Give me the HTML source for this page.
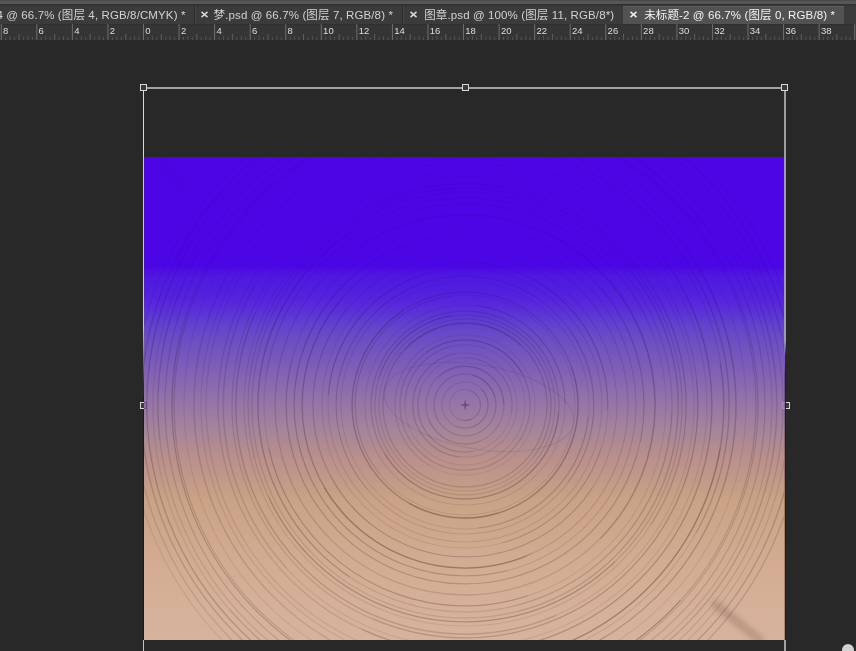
<!DOCTYPE html>
<html lang="zh"><head><meta charset="utf-8"><title>Photoshop</title>
<style>
html,body{margin:0;padding:0;}
body{width:856px;height:651px;overflow:hidden;background:#282828;position:relative;font-family:"Liberation Sans","Noto Sans CJK SC",sans-serif;}
#top{position:absolute;left:0;top:0;width:856px;height:4px;background:linear-gradient(to bottom,#4a4a4a 0,#4a4a4a 1.4px,#565656 1.4px,#565656 4px);}
#topline{position:absolute;left:0;top:4px;width:856px;height:2px;background:linear-gradient(to bottom,#2f2f2f,#363636);}
#tabs{position:absolute;left:0;top:6px;width:856px;height:18px;background:#3b3b3b;}
.tab{opacity:0.995;position:absolute;top:0;height:18px;line-height:19px;font-size:11.5px;letter-spacing:0.12px;color:#d2d2d2;white-space:nowrap;}
.xi{position:absolute;width:9px;height:9px;overflow:visible;}
.tab .x{position:absolute;top:0;font-size:11px;}
.sep{position:absolute;top:0;width:1px;height:18px;background:#2a2a2a;}
.sep2{position:absolute;top:0;width:1px;height:18px;background:#474747;}
#active{position:absolute;left:623px;top:6px;width:221px;height:18px;background:#525252;border-top:1px solid #5e5e5e;box-sizing:border-box;}
#ruler{position:absolute;left:0;top:24px;width:856px;height:16px;background:#353535;box-shadow:inset 0 1px 0 #303030;}
.rl{opacity:0.995;position:absolute;top:1.8px;font-size:9.5px;line-height:10px;color:#dedede;}
#img{position:absolute;left:144px;top:157px;width:641px;height:483px;overflow:hidden;
background:linear-gradient(to bottom,rgb(76,5,228) 0.00%,rgb(76,5,228) 22.77%,rgb(78,18,227) 23.40%,rgb(81,28,225) 24.84%,rgb(88,42,220) 29.61%,rgb(97,62,209) 33.75%,rgb(108,78,196) 37.89%,rgb(128,96,182) 44.10%,rgb(148,115,169) 50.31%,rgb(166,132,154) 56.52%,rgb(186,145,140) 62.73%,rgb(202,162,133) 71.01%,rgb(211,171,146) 83.44%,rgb(215,178,155) 97.93%,rgb(215,179,156) 100.00%);}
.ln{position:absolute;background:#a2a2a2;}
.hd{position:absolute;width:5px;height:5px;border:1px solid #d6d6d6;background:#3a3a3a;}
</style></head><body>
<div id="top"></div><div id="topline"></div>
<div id="tabs">
<div class="tab" style="left:-3.6px">4 @ 66.7% (图层 4, RGB/8/CMYK) *</div>
<div class="sep" style="left:194px"></div><div class="sep2" style="left:195px"></div>
<svg class="xi" style="left:199.7px;top:4.2px" viewBox="-4.5 -4.5 9 9"><path d="M-3 -2.6L3 2.6M3 -2.6L-3 2.6" stroke="#dcdcdc" stroke-width="1.4" fill="none"/></svg><div class="tab" style="left:213.6px">梦.psd @ 66.7% (图层 7, RGB/8) *</div>
<div class="sep" style="left:402px"></div><div class="sep2" style="left:403px"></div>
<svg class="xi" style="left:408.5px;top:4.2px" viewBox="-4.5 -4.5 9 9"><path d="M-3 -2.6L3 2.6M3 -2.6L-3 2.6" stroke="#dcdcdc" stroke-width="1.4" fill="none"/></svg><div class="tab" style="left:424.2px">图章.psd @ 100% (图层 11, RGB/8*)</div>
</div>
<div id="active"></div>
<svg class="xi" style="left:629.1px;top:10.2px" viewBox="-4.5 -4.5 9 9"><path d="M-3 -2.6L3 2.6M3 -2.6L-3 2.6" stroke="#f4f4f4" stroke-width="1.4" fill="none"/></svg><div class="tab" style="left:644.2px;top:6px;color:#f4f4f4">未标题-2 @ 66.7% (图层 0, RGB/8) *</div>
<div id="ruler">
<svg width="856" height="16" style="position:absolute;left:0;top:0"><rect x="0.76" y="0" width="1" height="16" fill="#bdbdbd" opacity="0.42"/><rect x="5.20" y="13" width="1" height="3" fill="#bdbdbd" opacity="0.22"/><rect x="9.65" y="12" width="1" height="4" fill="#bdbdbd" opacity="0.22"/><rect x="14.09" y="13" width="1" height="3" fill="#bdbdbd" opacity="0.22"/><rect x="18.54" y="10" width="1" height="6" fill="#bdbdbd" opacity="0.3"/><rect x="22.98" y="13" width="1" height="3" fill="#bdbdbd" opacity="0.22"/><rect x="27.43" y="12" width="1" height="4" fill="#bdbdbd" opacity="0.22"/><rect x="31.88" y="13" width="1" height="3" fill="#bdbdbd" opacity="0.22"/><rect x="36.32" y="0" width="1" height="16" fill="#bdbdbd" opacity="0.42"/><rect x="40.76" y="13" width="1" height="3" fill="#bdbdbd" opacity="0.22"/><rect x="45.21" y="12" width="1" height="4" fill="#bdbdbd" opacity="0.22"/><rect x="49.66" y="13" width="1" height="3" fill="#bdbdbd" opacity="0.22"/><rect x="54.10" y="10" width="1" height="6" fill="#bdbdbd" opacity="0.3"/><rect x="58.54" y="13" width="1" height="3" fill="#bdbdbd" opacity="0.22"/><rect x="62.99" y="12" width="1" height="4" fill="#bdbdbd" opacity="0.22"/><rect x="67.44" y="13" width="1" height="3" fill="#bdbdbd" opacity="0.22"/><rect x="71.88" y="0" width="1" height="16" fill="#bdbdbd" opacity="0.42"/><rect x="76.32" y="13" width="1" height="3" fill="#bdbdbd" opacity="0.22"/><rect x="80.77" y="12" width="1" height="4" fill="#bdbdbd" opacity="0.22"/><rect x="85.22" y="13" width="1" height="3" fill="#bdbdbd" opacity="0.22"/><rect x="89.66" y="10" width="1" height="6" fill="#bdbdbd" opacity="0.3"/><rect x="94.10" y="13" width="1" height="3" fill="#bdbdbd" opacity="0.22"/><rect x="98.55" y="12" width="1" height="4" fill="#bdbdbd" opacity="0.22"/><rect x="103.00" y="13" width="1" height="3" fill="#bdbdbd" opacity="0.22"/><rect x="107.44" y="0" width="1" height="16" fill="#bdbdbd" opacity="0.42"/><rect x="111.88" y="13" width="1" height="3" fill="#bdbdbd" opacity="0.22"/><rect x="116.33" y="12" width="1" height="4" fill="#bdbdbd" opacity="0.22"/><rect x="120.78" y="13" width="1" height="3" fill="#bdbdbd" opacity="0.22"/><rect x="125.22" y="10" width="1" height="6" fill="#bdbdbd" opacity="0.3"/><rect x="129.66" y="13" width="1" height="3" fill="#bdbdbd" opacity="0.22"/><rect x="134.11" y="12" width="1" height="4" fill="#bdbdbd" opacity="0.22"/><rect x="138.56" y="13" width="1" height="3" fill="#bdbdbd" opacity="0.22"/><rect x="143.00" y="0" width="1" height="16" fill="#bdbdbd" opacity="0.42"/><rect x="147.44" y="13" width="1" height="3" fill="#bdbdbd" opacity="0.22"/><rect x="151.89" y="12" width="1" height="4" fill="#bdbdbd" opacity="0.22"/><rect x="156.34" y="13" width="1" height="3" fill="#bdbdbd" opacity="0.22"/><rect x="160.78" y="10" width="1" height="6" fill="#bdbdbd" opacity="0.3"/><rect x="165.22" y="13" width="1" height="3" fill="#bdbdbd" opacity="0.22"/><rect x="169.67" y="12" width="1" height="4" fill="#bdbdbd" opacity="0.22"/><rect x="174.12" y="13" width="1" height="3" fill="#bdbdbd" opacity="0.22"/><rect x="178.56" y="0" width="1" height="16" fill="#bdbdbd" opacity="0.42"/><rect x="183.00" y="13" width="1" height="3" fill="#bdbdbd" opacity="0.22"/><rect x="187.45" y="12" width="1" height="4" fill="#bdbdbd" opacity="0.22"/><rect x="191.90" y="13" width="1" height="3" fill="#bdbdbd" opacity="0.22"/><rect x="196.34" y="10" width="1" height="6" fill="#bdbdbd" opacity="0.3"/><rect x="200.78" y="13" width="1" height="3" fill="#bdbdbd" opacity="0.22"/><rect x="205.23" y="12" width="1" height="4" fill="#bdbdbd" opacity="0.22"/><rect x="209.68" y="13" width="1" height="3" fill="#bdbdbd" opacity="0.22"/><rect x="214.12" y="0" width="1" height="16" fill="#bdbdbd" opacity="0.42"/><rect x="218.56" y="13" width="1" height="3" fill="#bdbdbd" opacity="0.22"/><rect x="223.01" y="12" width="1" height="4" fill="#bdbdbd" opacity="0.22"/><rect x="227.46" y="13" width="1" height="3" fill="#bdbdbd" opacity="0.22"/><rect x="231.90" y="10" width="1" height="6" fill="#bdbdbd" opacity="0.3"/><rect x="236.34" y="13" width="1" height="3" fill="#bdbdbd" opacity="0.22"/><rect x="240.79" y="12" width="1" height="4" fill="#bdbdbd" opacity="0.22"/><rect x="245.24" y="13" width="1" height="3" fill="#bdbdbd" opacity="0.22"/><rect x="249.68" y="0" width="1" height="16" fill="#bdbdbd" opacity="0.42"/><rect x="254.12" y="13" width="1" height="3" fill="#bdbdbd" opacity="0.22"/><rect x="258.57" y="12" width="1" height="4" fill="#bdbdbd" opacity="0.22"/><rect x="263.01" y="13" width="1" height="3" fill="#bdbdbd" opacity="0.22"/><rect x="267.46" y="10" width="1" height="6" fill="#bdbdbd" opacity="0.3"/><rect x="271.90" y="13" width="1" height="3" fill="#bdbdbd" opacity="0.22"/><rect x="276.35" y="12" width="1" height="4" fill="#bdbdbd" opacity="0.22"/><rect x="280.80" y="13" width="1" height="3" fill="#bdbdbd" opacity="0.22"/><rect x="285.24" y="0" width="1" height="16" fill="#bdbdbd" opacity="0.42"/><rect x="289.69" y="13" width="1" height="3" fill="#bdbdbd" opacity="0.22"/><rect x="294.13" y="12" width="1" height="4" fill="#bdbdbd" opacity="0.22"/><rect x="298.58" y="13" width="1" height="3" fill="#bdbdbd" opacity="0.22"/><rect x="303.02" y="10" width="1" height="6" fill="#bdbdbd" opacity="0.3"/><rect x="307.47" y="13" width="1" height="3" fill="#bdbdbd" opacity="0.22"/><rect x="311.91" y="12" width="1" height="4" fill="#bdbdbd" opacity="0.22"/><rect x="316.36" y="13" width="1" height="3" fill="#bdbdbd" opacity="0.22"/><rect x="320.80" y="0" width="1" height="16" fill="#bdbdbd" opacity="0.42"/><rect x="325.25" y="13" width="1" height="3" fill="#bdbdbd" opacity="0.22"/><rect x="329.69" y="12" width="1" height="4" fill="#bdbdbd" opacity="0.22"/><rect x="334.13" y="13" width="1" height="3" fill="#bdbdbd" opacity="0.22"/><rect x="338.58" y="10" width="1" height="6" fill="#bdbdbd" opacity="0.3"/><rect x="343.02" y="13" width="1" height="3" fill="#bdbdbd" opacity="0.22"/><rect x="347.47" y="12" width="1" height="4" fill="#bdbdbd" opacity="0.22"/><rect x="351.92" y="13" width="1" height="3" fill="#bdbdbd" opacity="0.22"/><rect x="356.36" y="0" width="1" height="16" fill="#bdbdbd" opacity="0.42"/><rect x="360.81" y="13" width="1" height="3" fill="#bdbdbd" opacity="0.22"/><rect x="365.25" y="12" width="1" height="4" fill="#bdbdbd" opacity="0.22"/><rect x="369.70" y="13" width="1" height="3" fill="#bdbdbd" opacity="0.22"/><rect x="374.14" y="10" width="1" height="6" fill="#bdbdbd" opacity="0.3"/><rect x="378.59" y="13" width="1" height="3" fill="#bdbdbd" opacity="0.22"/><rect x="383.03" y="12" width="1" height="4" fill="#bdbdbd" opacity="0.22"/><rect x="387.48" y="13" width="1" height="3" fill="#bdbdbd" opacity="0.22"/><rect x="391.92" y="0" width="1" height="16" fill="#bdbdbd" opacity="0.42"/><rect x="396.37" y="13" width="1" height="3" fill="#bdbdbd" opacity="0.22"/><rect x="400.81" y="12" width="1" height="4" fill="#bdbdbd" opacity="0.22"/><rect x="405.25" y="13" width="1" height="3" fill="#bdbdbd" opacity="0.22"/><rect x="409.70" y="10" width="1" height="6" fill="#bdbdbd" opacity="0.3"/><rect x="414.15" y="13" width="1" height="3" fill="#bdbdbd" opacity="0.22"/><rect x="418.59" y="12" width="1" height="4" fill="#bdbdbd" opacity="0.22"/><rect x="423.04" y="13" width="1" height="3" fill="#bdbdbd" opacity="0.22"/><rect x="427.48" y="0" width="1" height="16" fill="#bdbdbd" opacity="0.42"/><rect x="431.93" y="13" width="1" height="3" fill="#bdbdbd" opacity="0.22"/><rect x="436.37" y="12" width="1" height="4" fill="#bdbdbd" opacity="0.22"/><rect x="440.81" y="13" width="1" height="3" fill="#bdbdbd" opacity="0.22"/><rect x="445.26" y="10" width="1" height="6" fill="#bdbdbd" opacity="0.3"/><rect x="449.71" y="13" width="1" height="3" fill="#bdbdbd" opacity="0.22"/><rect x="454.15" y="12" width="1" height="4" fill="#bdbdbd" opacity="0.22"/><rect x="458.60" y="13" width="1" height="3" fill="#bdbdbd" opacity="0.22"/><rect x="463.04" y="0" width="1" height="16" fill="#bdbdbd" opacity="0.42"/><rect x="467.49" y="13" width="1" height="3" fill="#bdbdbd" opacity="0.22"/><rect x="471.93" y="12" width="1" height="4" fill="#bdbdbd" opacity="0.22"/><rect x="476.38" y="13" width="1" height="3" fill="#bdbdbd" opacity="0.22"/><rect x="480.82" y="10" width="1" height="6" fill="#bdbdbd" opacity="0.3"/><rect x="485.27" y="13" width="1" height="3" fill="#bdbdbd" opacity="0.22"/><rect x="489.71" y="12" width="1" height="4" fill="#bdbdbd" opacity="0.22"/><rect x="494.16" y="13" width="1" height="3" fill="#bdbdbd" opacity="0.22"/><rect x="498.60" y="0" width="1" height="16" fill="#bdbdbd" opacity="0.42"/><rect x="503.05" y="13" width="1" height="3" fill="#bdbdbd" opacity="0.22"/><rect x="507.49" y="12" width="1" height="4" fill="#bdbdbd" opacity="0.22"/><rect x="511.93" y="13" width="1" height="3" fill="#bdbdbd" opacity="0.22"/><rect x="516.38" y="10" width="1" height="6" fill="#bdbdbd" opacity="0.3"/><rect x="520.83" y="13" width="1" height="3" fill="#bdbdbd" opacity="0.22"/><rect x="525.27" y="12" width="1" height="4" fill="#bdbdbd" opacity="0.22"/><rect x="529.72" y="13" width="1" height="3" fill="#bdbdbd" opacity="0.22"/><rect x="534.16" y="0" width="1" height="16" fill="#bdbdbd" opacity="0.42"/><rect x="538.61" y="13" width="1" height="3" fill="#bdbdbd" opacity="0.22"/><rect x="543.05" y="12" width="1" height="4" fill="#bdbdbd" opacity="0.22"/><rect x="547.50" y="13" width="1" height="3" fill="#bdbdbd" opacity="0.22"/><rect x="551.94" y="10" width="1" height="6" fill="#bdbdbd" opacity="0.3"/><rect x="556.38" y="13" width="1" height="3" fill="#bdbdbd" opacity="0.22"/><rect x="560.83" y="12" width="1" height="4" fill="#bdbdbd" opacity="0.22"/><rect x="565.28" y="13" width="1" height="3" fill="#bdbdbd" opacity="0.22"/><rect x="569.72" y="0" width="1" height="16" fill="#bdbdbd" opacity="0.42"/><rect x="574.16" y="13" width="1" height="3" fill="#bdbdbd" opacity="0.22"/><rect x="578.61" y="12" width="1" height="4" fill="#bdbdbd" opacity="0.22"/><rect x="583.06" y="13" width="1" height="3" fill="#bdbdbd" opacity="0.22"/><rect x="587.50" y="10" width="1" height="6" fill="#bdbdbd" opacity="0.3"/><rect x="591.95" y="13" width="1" height="3" fill="#bdbdbd" opacity="0.22"/><rect x="596.39" y="12" width="1" height="4" fill="#bdbdbd" opacity="0.22"/><rect x="600.84" y="13" width="1" height="3" fill="#bdbdbd" opacity="0.22"/><rect x="605.28" y="0" width="1" height="16" fill="#bdbdbd" opacity="0.42"/><rect x="609.73" y="13" width="1" height="3" fill="#bdbdbd" opacity="0.22"/><rect x="614.17" y="12" width="1" height="4" fill="#bdbdbd" opacity="0.22"/><rect x="618.62" y="13" width="1" height="3" fill="#bdbdbd" opacity="0.22"/><rect x="623.06" y="10" width="1" height="6" fill="#bdbdbd" opacity="0.3"/><rect x="627.51" y="13" width="1" height="3" fill="#bdbdbd" opacity="0.22"/><rect x="631.95" y="12" width="1" height="4" fill="#bdbdbd" opacity="0.22"/><rect x="636.39" y="13" width="1" height="3" fill="#bdbdbd" opacity="0.22"/><rect x="640.84" y="0" width="1" height="16" fill="#bdbdbd" opacity="0.42"/><rect x="645.29" y="13" width="1" height="3" fill="#bdbdbd" opacity="0.22"/><rect x="649.73" y="12" width="1" height="4" fill="#bdbdbd" opacity="0.22"/><rect x="654.17" y="13" width="1" height="3" fill="#bdbdbd" opacity="0.22"/><rect x="658.62" y="10" width="1" height="6" fill="#bdbdbd" opacity="0.3"/><rect x="663.07" y="13" width="1" height="3" fill="#bdbdbd" opacity="0.22"/><rect x="667.51" y="12" width="1" height="4" fill="#bdbdbd" opacity="0.22"/><rect x="671.96" y="13" width="1" height="3" fill="#bdbdbd" opacity="0.22"/><rect x="676.40" y="0" width="1" height="16" fill="#bdbdbd" opacity="0.42"/><rect x="680.85" y="13" width="1" height="3" fill="#bdbdbd" opacity="0.22"/><rect x="685.29" y="12" width="1" height="4" fill="#bdbdbd" opacity="0.22"/><rect x="689.74" y="13" width="1" height="3" fill="#bdbdbd" opacity="0.22"/><rect x="694.18" y="10" width="1" height="6" fill="#bdbdbd" opacity="0.3"/><rect x="698.62" y="13" width="1" height="3" fill="#bdbdbd" opacity="0.22"/><rect x="703.07" y="12" width="1" height="4" fill="#bdbdbd" opacity="0.22"/><rect x="707.51" y="13" width="1" height="3" fill="#bdbdbd" opacity="0.22"/><rect x="711.96" y="0" width="1" height="16" fill="#bdbdbd" opacity="0.42"/><rect x="716.41" y="13" width="1" height="3" fill="#bdbdbd" opacity="0.22"/><rect x="720.85" y="12" width="1" height="4" fill="#bdbdbd" opacity="0.22"/><rect x="725.30" y="13" width="1" height="3" fill="#bdbdbd" opacity="0.22"/><rect x="729.74" y="10" width="1" height="6" fill="#bdbdbd" opacity="0.3"/><rect x="734.19" y="13" width="1" height="3" fill="#bdbdbd" opacity="0.22"/><rect x="738.63" y="12" width="1" height="4" fill="#bdbdbd" opacity="0.22"/><rect x="743.08" y="13" width="1" height="3" fill="#bdbdbd" opacity="0.22"/><rect x="747.52" y="0" width="1" height="16" fill="#bdbdbd" opacity="0.42"/><rect x="751.97" y="13" width="1" height="3" fill="#bdbdbd" opacity="0.22"/><rect x="756.41" y="12" width="1" height="4" fill="#bdbdbd" opacity="0.22"/><rect x="760.86" y="13" width="1" height="3" fill="#bdbdbd" opacity="0.22"/><rect x="765.30" y="10" width="1" height="6" fill="#bdbdbd" opacity="0.3"/><rect x="769.75" y="13" width="1" height="3" fill="#bdbdbd" opacity="0.22"/><rect x="774.19" y="12" width="1" height="4" fill="#bdbdbd" opacity="0.22"/><rect x="778.63" y="13" width="1" height="3" fill="#bdbdbd" opacity="0.22"/><rect x="783.08" y="0" width="1" height="16" fill="#bdbdbd" opacity="0.42"/><rect x="787.53" y="13" width="1" height="3" fill="#bdbdbd" opacity="0.22"/><rect x="791.97" y="12" width="1" height="4" fill="#bdbdbd" opacity="0.22"/><rect x="796.42" y="13" width="1" height="3" fill="#bdbdbd" opacity="0.22"/><rect x="800.86" y="10" width="1" height="6" fill="#bdbdbd" opacity="0.3"/><rect x="805.31" y="13" width="1" height="3" fill="#bdbdbd" opacity="0.22"/><rect x="809.75" y="12" width="1" height="4" fill="#bdbdbd" opacity="0.22"/><rect x="814.20" y="13" width="1" height="3" fill="#bdbdbd" opacity="0.22"/><rect x="818.64" y="0" width="1" height="16" fill="#bdbdbd" opacity="0.42"/><rect x="823.09" y="13" width="1" height="3" fill="#bdbdbd" opacity="0.22"/><rect x="827.53" y="12" width="1" height="4" fill="#bdbdbd" opacity="0.22"/><rect x="831.98" y="13" width="1" height="3" fill="#bdbdbd" opacity="0.22"/><rect x="836.42" y="10" width="1" height="6" fill="#bdbdbd" opacity="0.3"/><rect x="840.87" y="13" width="1" height="3" fill="#bdbdbd" opacity="0.22"/><rect x="845.31" y="12" width="1" height="4" fill="#bdbdbd" opacity="0.22"/><rect x="849.75" y="13" width="1" height="3" fill="#bdbdbd" opacity="0.22"/><rect x="854.20" y="0" width="1" height="16" fill="#bdbdbd" opacity="0.42"/></svg>
<span class="rl" style="left:3.1px">8</span><span class="rl" style="left:38.6px">6</span><span class="rl" style="left:74.2px">4</span><span class="rl" style="left:109.7px">2</span><span class="rl" style="left:145.3px">0</span><span class="rl" style="left:180.9px">2</span><span class="rl" style="left:216.4px">4</span><span class="rl" style="left:252.0px">6</span><span class="rl" style="left:287.5px">8</span><span class="rl" style="left:323.1px">10</span><span class="rl" style="left:358.7px">12</span><span class="rl" style="left:394.2px">14</span><span class="rl" style="left:429.8px">16</span><span class="rl" style="left:465.3px">18</span><span class="rl" style="left:500.9px">20</span><span class="rl" style="left:536.5px">22</span><span class="rl" style="left:572.0px">24</span><span class="rl" style="left:607.6px">26</span><span class="rl" style="left:643.1px">28</span><span class="rl" style="left:678.7px">30</span><span class="rl" style="left:714.3px">32</span><span class="rl" style="left:749.8px">34</span><span class="rl" style="left:785.4px">36</span><span class="rl" style="left:820.9px">38</span><span class="rl" style="left:856.5px">40</span>
</div>
<div id="img">
<svg width="640" height="483" viewBox="0 0 640 483" style="position:absolute;left:0;top:0;filter:blur(0.55px)" fill="none" stroke="#140a14">
<circle cx="321" cy="248" r="15.5" stroke-opacity="0.09" stroke-width="1.06"/><circle cx="321" cy="248" r="15.6" stroke-opacity="0.07" stroke-width="1.06" stroke-dasharray="16.3 81.1" stroke-dashoffset="80.0"/><circle cx="321" cy="248" r="15.4" stroke-opacity="0.07" stroke-width="1.06" stroke-dasharray="45.6 51.8" stroke-dashoffset="20.9"/><circle cx="321" cy="248" r="23" stroke-opacity="0.09" stroke-width="1.22"/><circle cx="321" cy="248" r="23.1" stroke-opacity="0.08" stroke-width="1.22" stroke-dasharray="63.5 81.0" stroke-dashoffset="17.9"/><circle cx="321" cy="248" r="31" stroke-opacity="0.14" stroke-width="1.23"/><circle cx="321" cy="248" r="30.7" stroke-opacity="0.10" stroke-width="1.23" stroke-dasharray="32.6 162.2" stroke-dashoffset="43.1"/><circle cx="321" cy="248" r="39" stroke-opacity="0.10" stroke-width="1.22"/><circle cx="321" cy="248" r="39.1" stroke-opacity="0.07" stroke-width="1.22" stroke-dasharray="63.2 181.8" stroke-dashoffset="200.0"/><circle cx="321" cy="248" r="38.7" stroke-opacity="0.10" stroke-width="1.22" stroke-dasharray="91.6 153.5" stroke-dashoffset="91.3"/><circle cx="321" cy="248" r="47" stroke-opacity="0.07" stroke-width="1.08"/><circle cx="321" cy="248" r="47.3" stroke-opacity="0.10" stroke-width="1.08" stroke-dasharray="99.3 196.1" stroke-dashoffset="229.5"/><circle cx="321" cy="248" r="47.2" stroke-opacity="0.07" stroke-width="1.08" stroke-dasharray="81.7 213.6" stroke-dashoffset="73.4"/><circle cx="321" cy="248" r="52" stroke-opacity="0.08" stroke-width="1.12"/><circle cx="321" cy="248" r="52.4" stroke-opacity="0.08" stroke-width="1.12" stroke-dasharray="149.1 177.6" stroke-dashoffset="238.3"/><circle cx="321" cy="248" r="60" stroke-opacity="0.08" stroke-width="1.17"/><circle cx="321" cy="248" r="60.1" stroke-opacity="0.06" stroke-width="1.17" stroke-dasharray="76.6 300.4" stroke-dashoffset="184.3"/><circle cx="321" cy="248" r="65" stroke-opacity="0.12" stroke-width="1.23"/><circle cx="321" cy="248" r="65.2" stroke-opacity="0.10" stroke-width="1.23" stroke-dasharray="109.9 298.5" stroke-dashoffset="143.0"/><circle cx="321" cy="248" r="70" stroke-opacity="0.07" stroke-width="1.04"/><circle cx="321" cy="248" r="70.2" stroke-opacity="0.06" stroke-width="1.04" stroke-dasharray="139.0 300.9" stroke-dashoffset="292.1"/><circle cx="321" cy="248" r="82" stroke-opacity="0.12" stroke-width="1.40"/><circle cx="321" cy="248" r="81.6" stroke-opacity="0.11" stroke-width="1.40" stroke-dasharray="128.6 386.6" stroke-dashoffset="198.8"/><circle cx="321" cy="248" r="86" stroke-opacity="0.10" stroke-width="1.07"/><circle cx="321" cy="248" r="86.2" stroke-opacity="0.08" stroke-width="1.07" stroke-dasharray="174.4 365.9" stroke-dashoffset="117.9"/><circle cx="321" cy="248" r="90" stroke-opacity="0.10" stroke-width="1.37"/><circle cx="321" cy="248" r="90.3" stroke-opacity="0.10" stroke-width="1.37" stroke-dasharray="100.8 464.7" stroke-dashoffset="254.0"/><circle cx="321" cy="248" r="94" stroke-opacity="0.13" stroke-width="1.35"/><circle cx="321" cy="248" r="93.9" stroke-opacity="0.11" stroke-width="1.35" stroke-dasharray="234.6 356.0" stroke-dashoffset="582.6"/><circle cx="321" cy="248" r="100" stroke-opacity="0.09" stroke-width="1.03"/><circle cx="321" cy="248" r="100.1" stroke-opacity="0.10" stroke-width="1.03" stroke-dasharray="145.3 483.1" stroke-dashoffset="146.6"/><circle cx="321" cy="248" r="110" stroke-opacity="0.09" stroke-width="1.00"/><circle cx="321" cy="248" r="109.7" stroke-opacity="0.09" stroke-width="1.00" stroke-dasharray="233.0 458.2" stroke-dashoffset="421.5"/><circle cx="321" cy="248" r="113" stroke-opacity="0.13" stroke-width="1.38"/><circle cx="321" cy="248" r="113.2" stroke-opacity="0.13" stroke-width="1.38" stroke-dasharray="274.5 435.5" stroke-dashoffset="38.3"/><circle cx="321" cy="248" r="112.9" stroke-opacity="0.09" stroke-width="1.38" stroke-dasharray="323.8 386.2" stroke-dashoffset="566.5"/><circle cx="321" cy="248" r="124" stroke-opacity="0.08" stroke-width="1.25"/><circle cx="321" cy="248" r="123.7" stroke-opacity="0.10" stroke-width="1.25" stroke-dasharray="168.8 610.3" stroke-dashoffset="767.2"/><circle cx="321" cy="248" r="129" stroke-opacity="0.11" stroke-width="1.04"/><circle cx="321" cy="248" r="128.6" stroke-opacity="0.09" stroke-width="1.04" stroke-dasharray="164.5 646.0" stroke-dashoffset="82.2"/><circle cx="321" cy="248" r="128.8" stroke-opacity="0.07" stroke-width="1.04" stroke-dasharray="369.6 440.9" stroke-dashoffset="497.7"/><circle cx="321" cy="248" r="137" stroke-opacity="0.09" stroke-width="1.15"/><circle cx="321" cy="248" r="137.0" stroke-opacity="0.14" stroke-width="1.15" stroke-dasharray="163.9 696.9" stroke-dashoffset="420.1"/><circle cx="321" cy="248" r="143" stroke-opacity="0.09" stroke-width="1.06"/><circle cx="321" cy="248" r="142.7" stroke-opacity="0.13" stroke-width="1.06" stroke-dasharray="242.5 656.0" stroke-dashoffset="237.9"/><circle cx="321" cy="248" r="142.7" stroke-opacity="0.10" stroke-width="1.06" stroke-dasharray="142.0 756.5" stroke-dashoffset="854.5"/><circle cx="321" cy="248" r="152" stroke-opacity="0.11" stroke-width="1.01"/><circle cx="321" cy="248" r="152.3" stroke-opacity="0.07" stroke-width="1.01" stroke-dasharray="242.9 712.1" stroke-dashoffset="614.0"/><circle cx="321" cy="248" r="151.8" stroke-opacity="0.09" stroke-width="1.01" stroke-dasharray="316.5 638.5" stroke-dashoffset="867.4"/><circle cx="321" cy="248" r="163" stroke-opacity="0.11" stroke-width="1.20"/><circle cx="321" cy="248" r="163.3" stroke-opacity="0.14" stroke-width="1.20" stroke-dasharray="233.6 790.6" stroke-dashoffset="831.1"/><circle cx="321" cy="248" r="162.8" stroke-opacity="0.12" stroke-width="1.20" stroke-dasharray="442.6 581.6" stroke-dashoffset="838.1"/><circle cx="321" cy="248" r="171" stroke-opacity="0.11" stroke-width="1.14"/><circle cx="321" cy="248" r="170.8" stroke-opacity="0.10" stroke-width="1.14" stroke-dasharray="533.3 541.1" stroke-dashoffset="848.9"/><circle cx="321" cy="248" r="179" stroke-opacity="0.11" stroke-width="1.14"/><circle cx="321" cy="248" r="178.8" stroke-opacity="0.09" stroke-width="1.14" stroke-dasharray="557.6 567.1" stroke-dashoffset="1074.1"/><circle cx="321" cy="248" r="179.1" stroke-opacity="0.08" stroke-width="1.14" stroke-dasharray="258.0 866.7" stroke-dashoffset="221.2"/><circle cx="321" cy="248" r="190" stroke-opacity="0.13" stroke-width="1.34"/><circle cx="321" cy="248" r="190.3" stroke-opacity="0.11" stroke-width="1.34" stroke-dasharray="559.0 634.8" stroke-dashoffset="410.7"/><circle cx="321" cy="248" r="201" stroke-opacity="0.08" stroke-width="1.16"/><circle cx="321" cy="248" r="201.2" stroke-opacity="0.07" stroke-width="1.16" stroke-dasharray="521.0 741.9" stroke-dashoffset="603.7"/><circle cx="321" cy="248" r="200.9" stroke-opacity="0.14" stroke-width="1.16" stroke-dasharray="336.4 926.5" stroke-dashoffset="1011.4"/><circle cx="321" cy="248" r="207" stroke-opacity="0.10" stroke-width="1.38"/><circle cx="321" cy="248" r="207.1" stroke-opacity="0.06" stroke-width="1.38" stroke-dasharray="267.4 1033.2" stroke-dashoffset="1291.7"/><circle cx="321" cy="248" r="207.1" stroke-opacity="0.11" stroke-width="1.38" stroke-dasharray="406.9 893.7" stroke-dashoffset="853.0"/><circle cx="321" cy="248" r="213" stroke-opacity="0.10" stroke-width="1.37"/><circle cx="321" cy="248" r="213.4" stroke-opacity="0.06" stroke-width="1.37" stroke-dasharray="457.7 880.6" stroke-dashoffset="175.3"/><circle cx="321" cy="248" r="217" stroke-opacity="0.12" stroke-width="1.21"/><circle cx="321" cy="248" r="216.8" stroke-opacity="0.13" stroke-width="1.21" stroke-dasharray="411.5 951.9" stroke-dashoffset="1188.6"/><circle cx="321" cy="248" r="221" stroke-opacity="0.09" stroke-width="1.12"/><circle cx="321" cy="248" r="221.3" stroke-opacity="0.10" stroke-width="1.12" stroke-dasharray="579.4 809.1" stroke-dashoffset="452.7"/><circle cx="321" cy="248" r="229" stroke-opacity="0.07" stroke-width="1.30"/><circle cx="321" cy="248" r="229.3" stroke-opacity="0.10" stroke-width="1.30" stroke-dasharray="549.4 889.4" stroke-dashoffset="1172.7"/><circle cx="321" cy="248" r="233" stroke-opacity="0.13" stroke-width="1.05"/><circle cx="321" cy="248" r="232.7" stroke-opacity="0.10" stroke-width="1.05" stroke-dasharray="487.8 976.1" stroke-dashoffset="27.4"/><circle cx="321" cy="248" r="242" stroke-opacity="0.07" stroke-width="1.32"/><circle cx="321" cy="248" r="241.6" stroke-opacity="0.07" stroke-width="1.32" stroke-dasharray="303.4 1217.1" stroke-dashoffset="941.4"/><circle cx="321" cy="248" r="247" stroke-opacity="0.12" stroke-width="1.21"/><circle cx="321" cy="248" r="246.8" stroke-opacity="0.10" stroke-width="1.21" stroke-dasharray="658.8 893.2" stroke-dashoffset="164.7"/><circle cx="321" cy="248" r="259" stroke-opacity="0.09" stroke-width="1.31"/><circle cx="321" cy="248" r="258.7" stroke-opacity="0.13" stroke-width="1.31" stroke-dasharray="501.6 1125.7" stroke-dashoffset="45.3"/><circle cx="321" cy="248" r="258.8" stroke-opacity="0.11" stroke-width="1.31" stroke-dasharray="429.6 1197.8" stroke-dashoffset="1584.0"/><circle cx="321" cy="248" r="264" stroke-opacity="0.09" stroke-width="1.20"/><circle cx="321" cy="248" r="264.3" stroke-opacity="0.10" stroke-width="1.20" stroke-dasharray="543.6 1115.2" stroke-dashoffset="410.8"/><circle cx="321" cy="248" r="271" stroke-opacity="0.13" stroke-width="1.37"/><circle cx="321" cy="248" r="271.0" stroke-opacity="0.07" stroke-width="1.37" stroke-dasharray="756.0 946.7" stroke-dashoffset="233.5"/><circle cx="321" cy="248" r="281" stroke-opacity="0.08" stroke-width="1.10"/><circle cx="321" cy="248" r="281.2" stroke-opacity="0.07" stroke-width="1.10" stroke-dasharray="396.3 1369.3" stroke-dashoffset="534.6"/><circle cx="321" cy="248" r="291" stroke-opacity="0.14" stroke-width="1.26"/><circle cx="321" cy="248" r="290.8" stroke-opacity="0.14" stroke-width="1.26" stroke-dasharray="365.8 1462.6" stroke-dashoffset="1614.2"/><circle cx="321" cy="248" r="293" stroke-opacity="0.14" stroke-width="1.16"/><circle cx="321" cy="248" r="293.2" stroke-opacity="0.08" stroke-width="1.16" stroke-dasharray="381.0 1459.9" stroke-dashoffset="1229.5"/><circle cx="321" cy="248" r="300" stroke-opacity="0.14" stroke-width="1.16"/><circle cx="321" cy="248" r="299.6" stroke-opacity="0.12" stroke-width="1.16" stroke-dasharray="411.9 1473.1" stroke-dashoffset="600.4"/><circle cx="321" cy="248" r="307" stroke-opacity="0.11" stroke-width="1.18"/><circle cx="321" cy="248" r="307.4" stroke-opacity="0.08" stroke-width="1.18" stroke-dasharray="548.8 1380.1" stroke-dashoffset="998.1"/><circle cx="321" cy="248" r="312" stroke-opacity="0.08" stroke-width="1.37"/><circle cx="321" cy="248" r="311.6" stroke-opacity="0.08" stroke-width="1.37" stroke-dasharray="960.8 999.6" stroke-dashoffset="205.4"/><circle cx="321" cy="248" r="318" stroke-opacity="0.12" stroke-width="1.11"/><circle cx="321" cy="248" r="318.4" stroke-opacity="0.11" stroke-width="1.11" stroke-dasharray="873.0 1125.1" stroke-dashoffset="1697.5"/><circle cx="321" cy="248" r="324" stroke-opacity="0.10" stroke-width="1.21"/><circle cx="321" cy="248" r="323.6" stroke-opacity="0.07" stroke-width="1.21" stroke-dasharray="711.9 1323.8" stroke-dashoffset="1425.9"/><circle cx="321" cy="248" r="324.4" stroke-opacity="0.07" stroke-width="1.21" stroke-dasharray="795.7 1240.0" stroke-dashoffset="865.8"/><circle cx="321" cy="248" r="331" stroke-opacity="0.11" stroke-width="1.32"/><circle cx="321" cy="248" r="330.7" stroke-opacity="0.08" stroke-width="1.32" stroke-dasharray="754.7 1325.1" stroke-dashoffset="462.5"/><circle cx="321" cy="248" r="338" stroke-opacity="0.07" stroke-width="1.40"/><circle cx="321" cy="248" r="338.0" stroke-opacity="0.07" stroke-width="1.40" stroke-dasharray="1007.4 1116.4" stroke-dashoffset="568.9"/>
<ellipse cx="335" cy="250" rx="96" ry="42" transform="rotate(10 335 250)" stroke-opacity="0.08" stroke-width="1.2"/>
<path d="M0 -5.5L1.1 -1.1L5.5 0L1.1 1.1L0 5.5L-1.1 1.1L-5.5 0L-1.1 -1.1Z" transform="translate(321.2 248)" fill="#2a1040" fill-opacity="0.4" stroke="none"/>
<path d="M572 448L616 483" stroke="#301810" stroke-opacity="0.16" stroke-width="9" stroke-linecap="round" style="filter:blur(2.5px)"/>
<path d="M18 6L40 28" stroke="#200060" stroke-opacity="0.10" stroke-width="9" stroke-linecap="round" style="filter:blur(2.5px)"/>
</svg>
<div style="position:absolute;left:0;top:0;width:641px;height:170px;background:linear-gradient(to bottom,rgba(76,5,228,0.68) 0,rgba(76,5,228,0.68) 108px,rgba(78,18,224,0.45) 118px,rgba(84,34,221,0) 170px)"></div>
</div>
<div class="ln" style="left:143px;top:87px;width:643px;height:2px"></div>
<div class="ln" style="left:143px;top:88px;width:1px;height:563px;background:linear-gradient(to bottom,#d8d8d8 0px,#d8d8d8 69px,rgb(204,192,232) 69px,rgb(204,192,232) 237px,rgba(150,120,190,0) 297px,rgba(15,10,25,0) 304px,rgba(15,10,25,0.55) 312px,rgba(15,10,25,0.55) 552px,#c4c4c4 552px,#c4c4c4 563px)"></div>
<div class="ln" style="left:784px;top:88px;width:2px;height:563px;background:linear-gradient(to bottom,#9e9e9e 0px,#9e9e9e 252px,rgba(158,158,158,0) 268px,rgba(0,0,0,0) 274px,rgba(0,0,0,0.22) 287px,rgba(0,0,0,0.22) 552px,#a4a4a4 552px,#a4a4a4 563px)"></div>
<div class="hd" style="left:140px;top:84px"></div>
<div class="hd" style="left:462px;top:84px"></div>
<div class="hd" style="left:781px;top:84px"></div>
<div style="position:absolute;left:140px;top:401.5px;width:4px;height:7px;overflow:hidden"><div class="hd" style="left:0;top:0"></div></div>
<div style="position:absolute;left:144px;top:401.5px;width:3px;height:7px;overflow:hidden"><div class="hd" style="left:-4px;top:0;border-color:rgba(70,30,110,0.35);background:rgba(120,80,160,0.25)"></div></div>
<div style="position:absolute;left:785.5px;top:401.5px;width:4px;height:7px;overflow:hidden"><div class="hd" style="left:-3px;top:0"></div></div>
<div style="position:absolute;left:782px;top:401.5px;width:3px;height:7px;overflow:hidden"><div class="hd" style="left:0;top:0;border-color:rgba(190,160,220,0.45);background:rgba(170,140,200,0.3)"></div></div>
<div style="position:absolute;left:841.5px;top:644px;width:12px;height:12px;border-radius:50%;background:#d2d2d2"></div>
</body></html>
